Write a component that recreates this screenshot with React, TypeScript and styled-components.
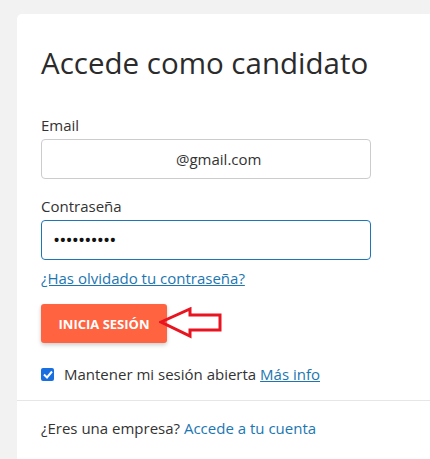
import React from "react"
import styled, { createGlobalStyle } from "styled-components"

const GlobalStyle = createGlobalStyle`
  html, body {
    margin: 0;
    padding: 0;
    background: #f2f2f2;
    font-family: "Open Sans", "Noto Sans", sans-serif;
    color: #333;
  }
`

const App = () => {
	return (
		<Page>
			<GlobalStyle />
			<Card>
				<Body>
					<Title>Accede como candidato</Title>
					<Field>
						<Label>Email</Label>
						<Input>
							<Masked />
							@gmail.com
						</Input>
					</Field>
					<Field>
						<Label>Contraseña</Label>
						<Input $focused>
							<Dots>••••••••••</Dots>
						</Input>
					</Field>
					<Forgot href="#">¿Has olvidado tu contraseña?</Forgot>
					<ButtonRow>
						<Button>INICIA SESIÓN</Button>
						<Arrow width="64" height="32" viewBox="0 0 64 32">
							<path
								d="M2 15 L31 2 L31 8 L61 8 L61 23 L31 23 L31 29 Z"
								fill="none"
								stroke="#e8141f"
								strokeWidth="3"
								strokeLinejoin="miter"
							/>
						</Arrow>
					</ButtonRow>
					<Remember>
						<Check>
							<svg width="10" height="9" viewBox="0 0 10 9">
								<path d="M1 4.5 L4 7.5 L9 1.5" fill="none" stroke="#fff" strokeWidth="2" />
							</svg>
						</Check>
						<span>
							Mantener mi sesión abierta <Link href="#">Más info</Link>
						</span>
					</Remember>
				</Body>
				<Footer>
					¿Eres una empresa? <PlainLink href="#">Accede a tu cuenta</PlainLink>
				</Footer>
			</Card>
		</Page>
	)
}
export default App

const Page = styled.div`
  padding: 14px 0 0 17px;
  height: 445px;
  overflow: hidden;
`
const Card = styled.div`
  background: #fff;
  border-radius: 5px 0 0 0;
  height: 100%;
`
const Body = styled.div`
  padding: 31px 0 15px 24px;
  width: 330px;
`
const Title = styled.h1`
  margin: 0 0 34px;
  font-size: 29.5px;
  font-weight: 500;
  color: #2b2b2b;
  line-height: 36px;
  white-space: nowrap;
`
const Field = styled.div`
  & + & {
    margin-top: 17px;
  }
`
const Label = styled.div`
  font-size: 15px;
  line-height: 20px;
  margin-bottom: 4px;
  color: #333;
`
const Input = styled.div<{ $focused?: boolean }>`
  box-sizing: border-box;
  height: 40px;
  width: 330px;
  border: 1px solid ${p => (p.$focused ? "#1f76b5" : "#cccccc")};
  border-radius: 4px;
  display: flex;
  align-items: center;
  padding-left: 11px;
  font-size: 15px;
  color: #333;
`
const Masked = styled.span`
  display: inline-block;
  width: 123px;
`
const Dots = styled.span`
  font-size: 19px;
  letter-spacing: -0.9px;
  color: #111;
`
const Link = styled.a`
  color: #1c76b2;
  text-decoration: underline;
`
const Forgot = styled(Link)`
  display: block;
  margin-top: 8px;
  font-size: 15px;
  line-height: 20px;
`
const PlainLink = styled.a`
  color: #1c76b2;
  text-decoration: none;
`
const ButtonRow = styled.div`
  display: flex;
  align-items: center;
  margin-top: 16px;
`
const Button = styled.button`
  width: 126px;
  height: 39px;
  border: none;
  border-radius: 3px;
  background: #ff6340;
  color: #fff;
  font-family: "Open Sans", sans-serif;
  font-weight: 700;
  font-size: 13px;
  box-shadow: 0 2px 4px rgba(0, 0, 0, 0.2);
  padding: 0;
`
const Arrow = styled.svg`
  margin-left: -8px;
  margin-top: -2px;
`
const Remember = styled.div`
  display: flex;
  align-items: center;
  gap: 10px;
  margin-top: 20px;
  font-size: 15px;
  line-height: 22px;
  white-space: nowrap;
`
const Check = styled.span`
  width: 13px;
  height: 13px;
  background: #1a6fe0;
  border-radius: 2px;
  display: flex;
  align-items: center;
  justify-content: center;
`
const Footer = styled.div`
  border-top: 1px solid #e6e6e6;
  padding: 16px 24px;
  font-size: 15px;
  line-height: 22px;
  color: #333;
`
